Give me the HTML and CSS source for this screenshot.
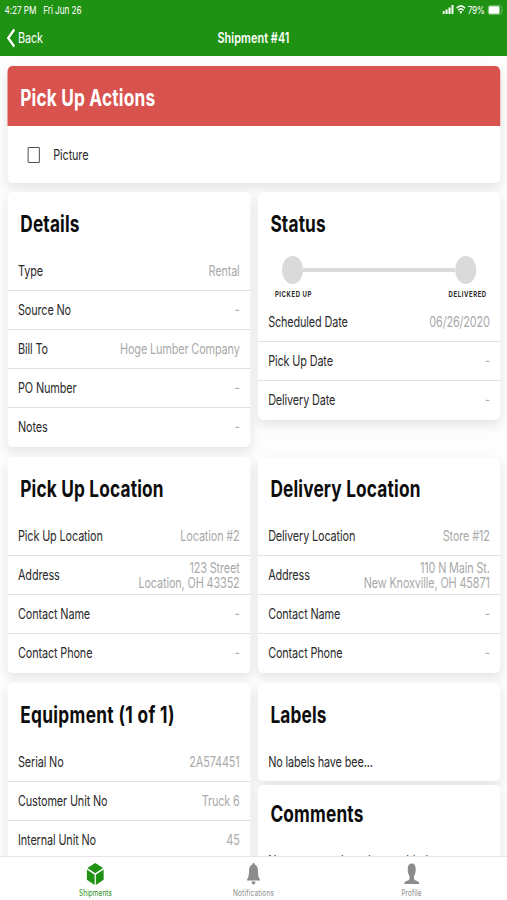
FILE: index.html
```html
<!DOCTYPE html>
<html lang="en">
<head>
<meta charset="utf-8">
<title>Shipment #41</title>
<link rel="stylesheet" href="styles.css">
</head>
<body>
<div class="screen">
  <header class="top">
    <div class="statusbar">
      <span class="time">4:27 PM</span><span class="date">Fri Jun 26</span>
      <span class="indicators">
        <svg class="signal" width="15" height="9" viewBox="0 0 15 9"><path d="M0 6h2.800v3H0zM4 4.500h2.800V9H4zM8 2.500h2.800V9H8zM12 0h2.800v9H12z" fill="#fff"/></svg>
        <svg class="wifi" width="13" height="9" viewBox="0 0 13 9"><path d="M.8 3.200Q6.500-1.400 12.200 3.200M2.800 5.300Q6.500 2.400 10.200 5.300" fill="none" stroke="#fff" stroke-width="1.700"/><path d="M4.500 6.600Q6.500 5.200 8.500 6.600L6.500 9z" fill="#fff"/></svg>
        <span class="percent">79%</span>
        <svg class="battery" width="22" height="10" viewBox="0 0 22 10"><rect x=".5" y=".5" width="18.500" height="9" rx="2.500" fill="none" stroke="#6fb868"/><rect x="1.500" y="1.200" width="14.500" height="7.600" rx="1.500" fill="#fff"/><path d="M20.300 3.200q1.300 1.800 0 3.600z" fill="#6fb868"/></svg>
      </span>
    </div>
    <div class="navbar">
      <div class="back"><svg width="12" height="20" viewBox="0 0 12 20"><path d="M10 1.500 2 10l8 8.500" fill="none" stroke="#fff" stroke-width="2.800"/></svg><span>Back</span></div>
      <h1>Shipment #41</h1>
      <div></div>
    </div>
  </header>

  <main>
    <section class="card actions">
      <h2>Pick Up Actions</h2>
      <div class="check"><span class="box"></span><span>Picture</span></div>
    </section>

    <div class="grid">
      <section class="card">
        <h2>Details</h2>
        <div class="row"><span>Type</span><span class="value">Rental</span></div>
        <div class="row"><span>Source No</span><span class="value">-</span></div>
        <div class="row"><span>Bill To</span><span class="value">Hoge Lumber Company</span></div>
        <div class="row"><span>PO Number</span><span class="value">-</span></div>
        <div class="row"><span>Notes</span><span class="value">-</span></div>
      </section>
      <section class="card">
        <h2>Status</h2>
        <div class="progress">
          <div class="track"><i class="dot"></i><i class="line"></i><i class="dot"></i></div>
          <div class="steps"><span>PICKED UP</span><span>DELIVERED</span></div>
        </div>
        <div class="row"><span>Scheduled Date</span><span class="value">06/26/2020</span></div>
        <div class="row"><span>Pick Up Date</span><span class="value">-</span></div>
        <div class="row"><span>Delivery Date</span><span class="value">-</span></div>
      </section>
      <section class="card">
        <h2>Pick Up Location</h2>
        <div class="row"><span>Pick Up Location</span><span class="value">Location #2</span></div>
        <div class="row"><span>Address</span><div class="value"><div>123 Street</div><div>Location, OH 43352</div></div></div>
        <div class="row"><span>Contact Name</span><span class="value">-</span></div>
        <div class="row"><span>Contact Phone</span><span class="value">-</span></div>
      </section>
      <section class="card">
        <h2>Delivery Location</h2>
        <div class="row"><span>Delivery Location</span><span class="value">Store #12</span></div>
        <div class="row"><span>Address</span><div class="value"><div>110 N Main St.</div><div>New Knoxville, OH 45871</div></div></div>
        <div class="row"><span>Contact Name</span><span class="value">-</span></div>
        <div class="row"><span>Contact Phone</span><span class="value">-</span></div>
      </section>
      <section class="card">
        <h2 class="loose">Equipment (1 of 1)</h2>
        <div class="row"><span>Serial No</span><span class="value">2A574451</span></div>
        <div class="row"><span>Customer Unit No</span><span class="value">Truck 6</span></div>
        <div class="row"><span>Internal Unit No</span><span class="value">45</span></div>
      </section>
      <div class="stack">
        <section class="card labels">
          <h2>Labels</h2>
          <div class="row"><span>No labels have bee...</span></div>
        </section>
        <section class="card comments">
          <h2>Comments</h2>
          <div class="row"><span>No comments have been added</span></div>
        </section>
      </div>
    </div>
  </main>

  <nav class="tabs">
    <div class="tab active">
      <svg width="24" height="22" viewBox="0 0 24 22"><path d="M12 0 22.500 5 12 10.200 1.500 5zM.8 6.500 11.200 11.700V22L.8 16.800zM23.200 6.500V16.800L12.800 22V11.700z" fill="#1f9113"/></svg>
      <span>Shipments</span>
    </div>
    <div class="tab wide">
      <svg width="22" height="22" viewBox="0 0 22 22"><path d="M11 0c1 0 1.600.7 1.600 1.600 3.200.8 4.400 3.400 4.400 6.400 0 5 1 6.500 2.500 8.300v1.200h-17v-1.200C4 14.500 5 13 5 8c0-3 1.200-5.600 4.400-6.400C9.400.700 10 0 11 0zM8.500 18.500h5c0 1.700-1 3-2.500 3s-2.500-1.300-2.500-3z" fill="#8c8c8c"/></svg>
      <span>Notifications</span>
    </div>
    <div class="tab">
      <svg width="22" height="22" viewBox="0 0 22 22"><path d="M11 .5c3.800 0 5.300 2.200 5.300 6 0 3-.8 5-2.300 6.500v2.500c0 1 1 1.500 3 2.200 3 .8 4 1.300 4 3.300H1c0-2 1-2.500 4-3.300 2-.7 3-1.200 3-2.200V13C6.500 11.500 5.700 9.500 5.700 6.500c0-3.800 1.500-6 5.300-6z" fill="#8c8c8c"/></svg>
      <span>Profile</span>
    </div>
  </nav>
</div>
</body>
</html>
```
FILE: styles.css
```css
* { box-sizing: border-box; }

html { overflow: hidden; }

body {
  margin: 0;
  width: 507px;
  height: 900px;
  overflow: hidden;
  background: #fff;
}

/* Tablet layout, condensed horizontally to the window width */
.screen {
  width: 676px;
  height: 900px;
  display: flex;
  flex-direction: column;
  transform: scaleX(0.75);
  transform-origin: 0 0;
  font-family: Inter, "Liberation Sans", sans-serif;
  font-size: 14.500px;
  letter-spacing: -0.180px;
  color: #2b2b2b;
  background: #fdfdfd;
}

.top {
  flex: none;
  height: 56px;
  background: #1f9113;
  color: #fff;
}

.statusbar {
  height: 19px;
  padding: 0 4px 0 6px;
  display: flex;
  align-items: center;
  font-size: 11px;
  letter-spacing: -0.1px;
}
.date { margin-left: 9px; }
.indicators {
  margin-left: auto;
  display: flex;
  align-items: center;
}
.wifi { margin: 0 3px; }
.percent {
  margin-right: 4px;
  letter-spacing: -0.500px;
}

.navbar {
  height: 37px;
  padding: 0 9px;
  display: grid;
  grid-template-columns: 1fr auto 1fr;
  align-items: center;
}
.back {
  display: flex;
  align-items: center;
  gap: 3px;
}
h1 {
  margin: 0;
  font-size: 14.500px;
  font-weight: 600;
  letter-spacing: 0.080px;
}

main {
  flex: 1;
  min-height: 0;
  overflow: hidden;
  padding: 10px 9px 0 10px;
}

.card {
  background: #fff;
  border-radius: 6px;
  box-shadow: 0 5px 12px rgba(0, 0, 0, 0.1);
}
h2 {
  margin: 0;
  height: 60px;
  padding: 3px 17px 0;
  display: flex;
  align-items: center;
  font-size: 23px;
  font-weight: 700;
  letter-spacing: 0.240px;
  color: #0c0c0c;
}
.loose { letter-spacing: 0.450px; }
.actions {
  height: 117px;
  margin-bottom: 9px;
}
.actions h2 {
  background: #d8524e;
  color: #fff;
  border-radius: 6px 6px 0 0;
}
.check {
  height: 57px;
  padding-left: 27px;
  display: flex;
  align-items: center;
  gap: 18px;
}
.box {
  width: 16px;
  height: 16px;
  border: 1.500px solid #333;
  border-radius: 1px;
}

.grid {
  display: grid;
  grid-template-columns: 1fr 1fr;
  align-items: start;
  gap: 10px;
}
.row {
  height: 39px;
  padding: 0 14px 1px;
  display: flex;
  align-items: center;
  justify-content: space-between;
  line-height: 15px;
  border-bottom: 1px solid #e2e2e2;
}
.row:last-child { border-bottom-color: transparent; }
.value {
  color: #aaa;
  text-align: right;
}

.progress {
  height: 51px;
  padding: 4px 18px 0 23px;
}
.track {
  display: flex;
  align-items: center;
  padding: 0 14px 0 9px;
}
.dot {
  width: 28px;
  height: 28px;
  border-radius: 50%;
  background: #dadada;
}
.line {
  flex: 1;
  height: 4px;
  background: #dadada;
}
.steps {
  display: flex;
  justify-content: space-between;
  margin-top: 5px;
  font-size: 8px;
  line-height: 10px;
  font-weight: 700;
  letter-spacing: 0.750px;
}

.labels { height: 98px; }
.comments { margin-top: 4px; }
.comments h2 { height: 57px; padding-top: 0; }

.tabs {
  position: relative;
  flex: none;
  height: 44px;
  padding: 0 22px;
  display: grid;
  grid-template-columns: repeat(3, 1fr);
  background: #fff;
  border-top: 1px solid #e6e6e6;
}
.tab {
  display: flex;
  flex-direction: column;
  align-items: center;
  padding-top: 6px;
  font-size: 8.500px;
  line-height: 10px;
  gap: 3px;
  letter-spacing: 0.150px;
  color: #8c8c8c;
}
.wide { letter-spacing: 0.300px; }
.active { color: #1f9113; }
```
